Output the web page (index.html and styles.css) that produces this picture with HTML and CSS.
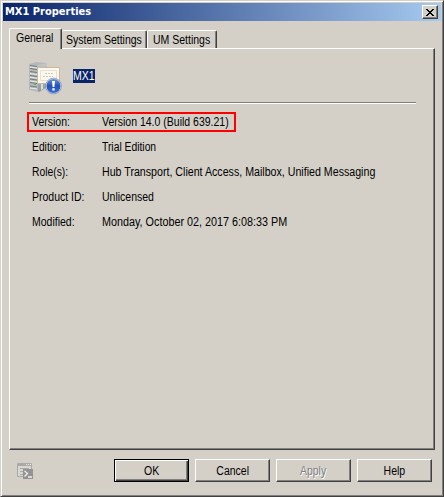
FILE: index.html
```html
<!DOCTYPE html>
<html lang="en">
<head>
<meta charset="utf-8">
<title>MX1 Properties</title>
<link rel="stylesheet" href="styles.css">
</head>
<body>
<div class="window">
  <header class="titlebar">
    <span class="title">MX1 Properties</span>
    <button class="close" aria-label="Close">
      <svg width="8" height="7" viewBox="0 0 8 7" shape-rendering="crispEdges"><path d="M0 0h2v1h1v1h2v-1h1v-1h2v1h-1v1h-1v1h-1v1h1v1h1v1h1v1h-2v-1h-1v-1h-2v1h-1v1h-2v-1h1v-1h1v-1h1v-1h-1v-1h-1v-1h-1z"/></svg>
    </button>
  </header>
  <nav class="tabs">
    <div class="tab active"><span class="text">General</span></div>
    <div class="tab system"><span class="text">System Settings</span></div>
    <div class="tab um"><span class="text">UM Settings</span></div>
  </nav>
  <main class="panel">
    <div class="identity">
      <svg class="server" width="34" height="34" viewBox="0 0 34 34">
        <defs>
          <linearGradient id="side" x2="0" y2="1"><stop offset="0" stop-color="#c3c8c9"/><stop offset="1" stop-color="#8f989b"/></linearGradient>
          <linearGradient id="blue" x2="0" y2="1"><stop offset="0" stop-color="#6f97dd"/><stop offset=".5" stop-color="#2450b8"/><stop offset="1" stop-color="#3a70d6"/></linearGradient>
        </defs>
        <path d="M0 3l7-2 11 1v24l-8 5-10-2z" fill="#b4babc"/>
        <path d="M9 4l9-2v24l-8 5-1-1z" fill="url(#side)"/>
        <path d="M1 4.500l7 1M1 7.500l7 1M1 10.500l7 1M1 14.500l7 1M1 18l7 1M1 21.500l7 1M1 25l7 1" stroke="#6f7a7e"/>
        <path d="M1 6l7 1M1 12.500l7 1M1 16.300l7 1M1 20l7 1M1 27l7 1" stroke="#e9eced"/>
        <path d="M5 22h2v2h-2z" fill="#6bab58"/>
        <path d="M8.500 6.500h22v16h-22z" fill="#fbf8f0" stroke="#cdb798"/>
        <path d="M11.500 9.500h16v10h-16z" fill="none" stroke="#e9dfcf"/>
        <path d="M16 12.500h8M14 15.500h10" stroke="#cfc8ba" stroke-dasharray="2 1"/>
        <path d="M12 23l2 0v5l-2 1z" fill="#dcdcd6"/>
        <circle cx="24.500" cy="25" r="7.500" fill="url(#blue)" stroke="#dce3ee"/>
        <circle cx="24.500" cy="25" r="7.900" fill="none" stroke="#657a9c" stroke-width=".6"/>
        <path d="M23 20h3l-.6 6h-1.800zM23.300 27.300h2.400v2.300h-2.400z" fill="#fff"/>
      </svg>
      <span class="name"><span class="text">MX1</span></span>
    </div>
    <div class="rule"></div>
    <div class="details">
      <div class="row marked"><span class="key"><span class="text">Version:</span></span><span class="text">Version 14.0 (Build 639.21)</span></div>
      <div class="row"><span class="key"><span class="text tight">Edition:</span></span><span class="text tight">Trial Edition</span></div>
      <div class="row"><span class="key"><span class="text tight">Role(s):</span></span><span class="text roles">Hub Transport, Client Access, Mailbox, Unified Messaging</span></div>
      <div class="row"><span class="key"><span class="text">Product ID:</span></span><span class="text">Unlicensed</span></div>
      <div class="row"><span class="key"><span class="text">Modified:</span></span><span class="text loose">Monday, October 02, 2017 6:08:33 PM</span></div>
    </div>
  </main>
  <footer class="footer">
    <svg class="shell" width="17" height="17" viewBox="0 0 17 17">
      <path d="M.5.500h14v13H.5z" fill="#d9d7d1" stroke="#aaa9a7"/>
      <path d="M1 1h13v2H1z" fill="#aaa9a7"/>
      <path d="M9 1.500h1M11 1.500h1M13 1.500h1" stroke="#eee"/>
      <path d="M3 5.500h9M3 8.500h3M3 11.500h3" stroke="#aaa"/>
      <path d="M6 6h10v10H6z" fill="#939393"/>
      <path d="M7.500 8l3 2.500-3 3M11 14h4" fill="none" stroke="#f0f0ee" stroke-width="1.300"/>
    </svg>
    <button class="btn default"><span class="text">OK</span></button>
    <button class="btn"><span class="text">Cancel</span></button>
    <button class="btn disabled" disabled><span class="text">Apply</span></button>
    <button class="btn"><span class="text">Help</span></button>
  </footer>
</div>
</body>
</html>
```
FILE: styles.css
```css
* { box-sizing: border-box; }
body {
  margin: 0;
  background: #d4d0c8;
  color: #000;
  font: 12px/14px "Liberation Sans", Arial, sans-serif;
}
svg { display: block; }
button { font: inherit; color: inherit; padding: 0; border-radius: 0; }
.text {
  display: inline-block;
  white-space: nowrap;
  transform: scaleX(.875);
  transform-origin: 0 50%;
}
.text.tight { transform: scaleX(.86); }
.text.loose { transform: scaleX(.9); }
.text.roles { transform: scaleX(.887); }
.window {
  width: 444px;
  height: 497px;
  padding: 1px;
  border: 1px solid;
  border-color: #d4d0c8 #404040 #404040 #d4d0c8;
  box-shadow: inset 1px 1px #fff, inset -1px -1px #808080;
}
.titlebar {
  height: 18px;
  margin: 1px 1px 0;
  padding: 0 3px 0 2px;
  display: flex;
  align-items: center;
  justify-content: space-between;
  background: linear-gradient(90deg, #0a246a, #a6caf0);
}
.title {
  color: #fff;
  font: bold 11px/16px "DejaVu Sans Condensed", "DejaVu Sans", sans-serif;
  font-stretch: condensed;
}
.close {
  width: 16px;
  height: 14px;
  display: flex;
  align-items: center;
  justify-content: center;
  background: #d4d0c8;
  border: 1px solid;
  border-color: #fff #404040 #404040 #fff;
  box-shadow: inset -1px -1px #808080;
}
.tabs {
  height: 27px;
  padding-left: 7px;
  display: flex;
  align-items: flex-end;
}
.tab {
  height: 18px;
  padding: 2px 0 0 4px;
  border-top: 1px solid #fff;
  border-right: 1px solid #404040;
  border-radius: 2px 2px 0 0;
  box-shadow: inset -1px 0 #808080;
  white-space: nowrap;
}
.tab.active {
  width: 53px;
  height: 21px;
  margin-bottom: -1px;
  padding: 2px 0 0 6px;
  border-left: 1px solid #fff;
  background: #d4d0c8;
  position: relative;
}
.tab.system { width: 85px; }
.tab.um { width: 70px; padding-left: 5px; border-left: 1px solid #fff; }
.panel {
  width: 426px;
  height: 402px;
  margin-left: 7px;
  padding: 12px 18px 0 17px;
  border: 1px solid;
  border-color: #fff #404040 #404040 #fff;
  box-shadow: inset -1px -1px #808080;
}
.identity { height: 41px; padding-left: 2px; display: flex; }
.name {
  width: 22px;
  height: 14px;
  margin: 8px 0 0 10px;
  background: #0a246a;
  color: #fff;
}
.rule {
  height: 2px;
  margin: 0 0 0 2px;
  border-top: 1px solid #808080;
  border-bottom: 1px solid #fff;
}
.details { padding-top: 6px; }
.row {
  height: 25px;
  padding: 5px 0 0 5px;
  display: flex;
  white-space: nowrap;
}
.row.marked {
  width: 209px;
  height: 20px;
  margin: 2px 0 3px;
  padding: 1px 0 0 3px;
  border: 2px solid #f00;
}
.key { width: 70px; flex: none; }
.footer {
  padding: 9px 10px 0 15px;
  display: flex;
  gap: 6px;
}
.shell { margin: 4px 74px 0 0; }
.btn {
  width: 75px;
  height: 23px;
  background: #d4d0c8;
  border: 1px solid;
  border-color: #fff #404040 #404040 #fff;
  box-shadow: inset -1px -1px #808080;
}
.btn .text { transform-origin: 50% 50%; }
.btn.default {
  border-color: #000;
  box-shadow: inset 1px 1px #fff, inset -1px -1px #404040, inset -2px -2px #808080;
}
.btn.disabled { color: #808080; text-shadow: 1px 1px #fff; }
```
